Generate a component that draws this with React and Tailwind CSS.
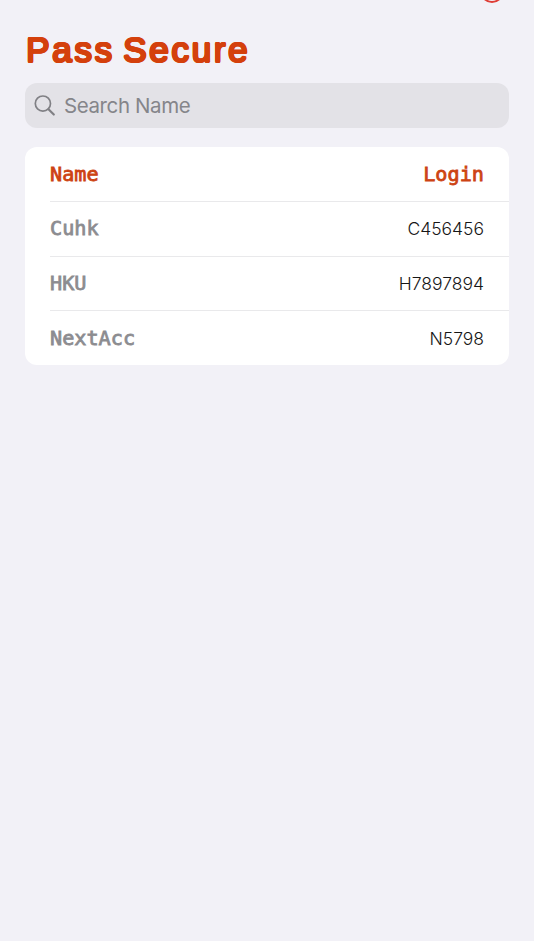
const accounts = [
  { name: 'Cuhk', login: 'C456456' },
  { name: 'HKU', login: 'H7897894' },
  { name: 'NextAcc', login: 'N5798' },
];

const mono =
  "font-['DejaVu_Sans_Mono','Liberation_Mono',monospace] text-[20.2px] leading-6 [-webkit-text-stroke:0.8px_currentColor]";

function SearchIcon() {
  return (
    <svg className="h-[22px] w-[22px] shrink-0" viewBox="0 0 22 22" fill="none" stroke="#808085" strokeLinecap="round">
      <circle cx="8.9" cy="8.6" r="7.6" strokeWidth="1.7" />
      <path d="M14.5 14.2L19.8 19.5" strokeWidth="2.2" />
    </svg>
  );
}

export default function App() {
  return (
    <div className="h-[950px] w-full overflow-hidden bg-white">
      <main className="relative h-[941px] bg-[#f2f1f7] px-[25px] pt-[27px] font-['Inter','Liberation_Sans',sans-serif]">
        <div className="absolute top-[-21px] left-[480px] h-6 w-6 rounded-full border-2 border-[#df3d35]" />
        <h1 className="h-[56px] pl-px font-['Liberation_Sans',sans-serif] text-[35.5px] leading-[46px] tracking-[2.45px] [word-spacing:-4px] whitespace-nowrap text-[#d4400c] [text-shadow:1.1px_0_0,-1.1px_0_0,0_.9px_0,0_-.9px_0,.8px_.7px_0,-.8px_.7px_0,.8px_-.7px_0,-.8px_-.7px_0]">
          Pass Secure
        </h1>
        <div className="flex h-[45px] items-center gap-2 rounded-[12px] bg-[#e3e2e7] pl-[9px]">
          <SearchIcon />
          <span className="pt-[2px] text-[20.5px] tracking-[-0.4px] text-[#85858a]">Search Name</span>
        </div>
        <section className="mt-[19px] overflow-hidden rounded-[12px] bg-white pl-[25px]">
          <div className="flex h-[54px] items-center justify-between pr-[25px] text-[#cd4313]">
            <span className={mono}>Name</span>
            <span className={mono}>Login</span>
          </div>
          {accounts.map(({ name, login }) => (
            <div
              key={name}
              className="flex h-[54.7px] items-center justify-between border-t border-[#e9e9eb] pr-[25px] pb-px"
            >
              <span className={`${mono} text-[#8c8c90]`}>{name}</span>
              <span className="pt-[2px] text-[17.5px] font-light text-[#161616]">{login}</span>
            </div>
          ))}
        </section>
      </main>
    </div>
  );
}
